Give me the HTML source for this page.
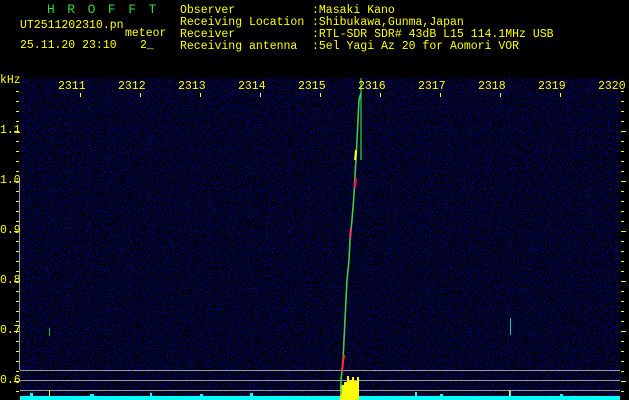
<!DOCTYPE html>
<html><head><meta charset="utf-8"><style>
html,body{margin:0;padding:0;background:#000;width:629px;height:400px;overflow:hidden}
.t{position:absolute;font-family:"Liberation Mono",monospace;font-size:11.5px;line-height:12px;color:#ffff00;white-space:pre}
</style></head><body>
<svg width="629" height="400" style="position:absolute;left:0;top:0">
<defs>
<filter id="n" x="0" y="0" width="100%" height="100%">
<feTurbulence type="fractalNoise" baseFrequency="0.95" numOctaves="1" seed="3"/>
<feColorMatrix values="0 0 0 0 0  0 0 0 0 0  3.2 0 0 0 -1.75  0 0 0 0 1"/>
</filter>
</defs>
<rect x="20" y="78" width="600" height="322" fill="#000"/>
<rect x="20" y="78" width="600" height="322" filter="url(#n)"/>
<line x1="19.5" y1="180" x2="19.5" y2="370" stroke="#999" stroke-width="1"/>
<line x1="20" y1="370.5" x2="620" y2="370.5" stroke="#999"/>
<line x1="20" y1="380.5" x2="620" y2="380.5" stroke="#999"/>
<line x1="20" y1="390.5" x2="620" y2="390.5" stroke="#999"/>
<g stroke="#ff0" stroke-width="1">
<path d="M16 91.5h3M16 101.5h3M16 111.5h3M16 121.5h3M14 131.5h5M16 141.5h3M16 151.5h3M16 161.5h3M16 171.5h3M14 181.5h5M16 191.5h3M16 201.5h3M16 211.5h3M16 221.5h3M14 231.5h5M16 241.5h3M16 251.5h3M16 261.5h3M16 271.5h3M14 281.5h5M16 291.5h3M16 301.5h3M16 311.5h3M16 321.5h3M14 331.5h5M16 341.5h3M16 351.5h3M16 361.5h3M16 371.5h3M14 381.5h5M16 391.5h3"/>
<path d="M621 91.5h3M621 101.5h3M621 111.5h3M621 121.5h3M621 131.5h5M621 141.5h3M621 151.5h3M621 161.5h3M621 171.5h3M621 181.5h5M621 191.5h3M621 201.5h3M621 211.5h3M621 221.5h3M621 231.5h5M621 241.5h3M621 251.5h3M621 261.5h3M621 271.5h3M621 281.5h5M621 291.5h3M621 301.5h3M621 311.5h3M621 321.5h3M621 331.5h5M621 341.5h3M621 351.5h3M621 361.5h3M621 371.5h3M621 381.5h5M621 391.5h3"/>
<path d="M80.5 93v4M140.5 93v4M200.5 93v4M260.5 93v4M320.5 93v4M380.5 93v4M440.5 93v4M500.5 93v4M560.5 93v4"/>
<path d="M49.5 390v10M509.5 390v10"/>
</g>
<line x1="49.5" y1="328" x2="49.5" y2="336" stroke="#2a6"/>
<line x1="510.5" y1="318" x2="510.5" y2="335" stroke="#0cc"/>
<rect x="20" y="396" width="600" height="4" fill="#00ffff"/>
<path d="M30 396v-3h3v3M90 396v-2h4v2M150 396v-3h2v3M200 396v-2h3v2M250 396v-3h3v3M415 396v-4h2v4M440 396v-2h3v2M510 396v-6h1v6M560 396v-2h3v2" fill="#0ff"/>
<path d="M340 400V385h4v-3h3v-6h2v4h3v-3h2v4h3v-4h2V400z" fill="#ff0"/>
<polyline points="341,395 341,380 343,360 344,340 345,320 346,300 347,280 349,260 350,240 352,220 354,195 355,175 356,160 357,140 358,120 359,100 361,93" fill="none" stroke="#4c4" stroke-width="1.6"/>
<polyline points="342,372 343,362 344,355" fill="none" stroke="#f33" stroke-width="2"/>
<polyline points="350,238 351,228" fill="none" stroke="#f36" stroke-width="2"/>
<polyline points="355,188 356,178" fill="none" stroke="#f06" stroke-width="2"/>
<polyline points="355,160 356,150" fill="none" stroke="#ff3" stroke-width="2"/>
<line x1="361" y1="78" x2="361" y2="160" stroke="#3d3" stroke-width="1.2"/>
</svg>
<div class="t" style="left:47px;top:4px;color:#33dd33;font-size:13px;letter-spacing:12.5px">HROFFT</div>
<div class="t" style="left:20px;top:20px">UT2511202310.pn</div>
<div class="t" style="left:125px;top:28px">meteor</div>
<div class="t" style="left:20px;top:40px">25.11.20 23:10</div>
<div class="t" style="left:140px;top:40px">2_</div>
<div class="t" style="left:180px;top:5px">Observer</div>
<div class="t" style="left:180px;top:17px">Receiving Location</div>
<div class="t" style="left:180px;top:29px">Receiver</div>
<div class="t" style="left:180px;top:41px">Receiving antenna</div>
<div class="t" style="left:312px;top:5px">:Masaki Kano</div>
<div class="t" style="left:312px;top:17px">:Shibukawa,Gunma,Japan</div>
<div class="t" style="left:312px;top:29px">:RTL-SDR SDR# 43dB L15 114.1MHz USB</div>
<div class="t" style="left:312px;top:41px">:5el Yagi Az 20 for Aomori VOR</div>
<div class="t" style="left:0;top:75px">kHz</div>
<div class="t" style="left:58px;top:81px">2311</div>
<div class="t" style="left:118px;top:81px">2312</div>
<div class="t" style="left:178px;top:81px">2313</div>
<div class="t" style="left:238px;top:81px">2314</div>
<div class="t" style="left:298px;top:81px">2315</div>
<div class="t" style="left:358px;top:81px">2316</div>
<div class="t" style="left:418px;top:81px">2317</div>
<div class="t" style="left:478px;top:81px">2318</div>
<div class="t" style="left:538px;top:81px">2319</div>
<div class="t" style="left:598px;top:81px">2320</div>
<div class="t" style="left:0;top:125px">1.1</div>
<div class="t" style="left:0;top:175px">1.0</div>
<div class="t" style="left:0;top:225px">0.9</div>
<div class="t" style="left:0;top:275px">0.8</div>
<div class="t" style="left:0;top:325px">0.7</div>
<div class="t" style="left:0;top:375px">0.6</div>
</body></html>
